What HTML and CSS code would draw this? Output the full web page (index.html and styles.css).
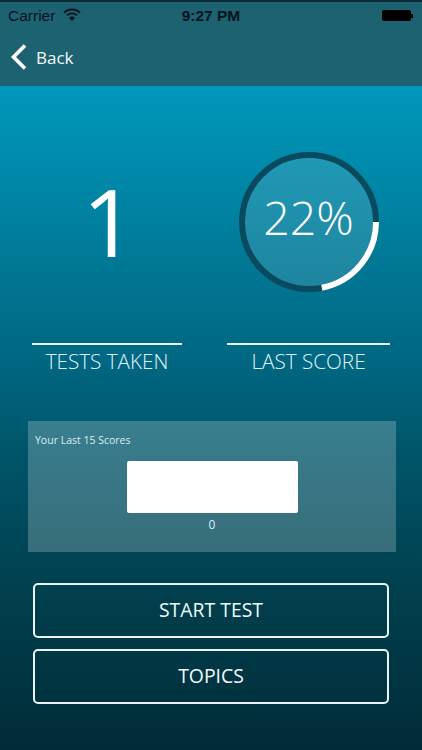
FILE: index.html
```html
<!DOCTYPE html>
<html lang="en">
<head>
<meta charset="utf-8">
<title>Test stats</title>
<link rel="stylesheet" href="styles.css">
</head>
<body>
<div class="screen">
  <header class="top">
    <div class="status">
      <div class="status-left">
        <span>Carrier</span>
        <svg class="wifi" viewBox="0 0 18 13" width="18" height="13"><path d="M1 4.6C5.6.4 12.4.4 17 4.6" fill="none" stroke="#04141c" stroke-width="1.8"/><path d="M3.8 7.4c3-2.7 7.4-2.7 10.400 0" fill="none" stroke="#04141c" stroke-width="1.800"/><path d="M9 13 5.900 9.700c1.800-1.500 4.400-1.500 6.200 0z" fill="#04141c"/></svg>
      </div>
      <span class="clock">9:27 PM</span>
      <div class="battery"><span class="battery-body"></span><span class="battery-tip"></span></div>
    </div>
    <nav class="nav">
      <svg class="chevron" viewBox="0 0 18 28" width="18" height="28"><path d="M15 2.500 3.500 14 15 25.500" fill="none" stroke="#fff" stroke-width="3.600"/></svg>
      <span>Back</span>
    </nav>
  </header>
  <main class="content">
    <section class="stats">
      <div class="stat stat-left">
        <div class="stat-value stat-value-number"><span class="big-one">1</span></div>
        <div class="stat-label">TESTS TAKEN</div>
      </div>
      <div class="stat stat-right">
        <div class="stat-value">
          <div class="ring">
            <svg viewBox="0 0 140 140" width="140" height="140">
              <circle cx="70" cy="70" r="67" fill="#ffffff" fill-opacity="0.12" stroke="#0a4a5e" stroke-width="6"/>
              <path d="M137 70A67 67 0 0 1 82.800 135.800" fill="none" stroke="#fff" stroke-width="6"/>
            </svg>
            <span class="ring-text">22%</span>
          </div>
        </div>
        <div class="stat-label">LAST SCORE</div>
      </div>
    </section>
    <section class="panel">
      <div class="panel-title">Your Last 15 Scores</div>
      <div class="bar"></div>
      <div class="bar-label">0</div>
    </section>
    <section class="actions">
      <a class="btn">START TEST</a>
      <a class="btn">TOPICS</a>
    </section>
  </main>
</div>
</body>
</html>
```
FILE: styles.css
```css
* { box-sizing: border-box; }
html, body { margin: 0; height: 100%; }
body { font-family: "Open Sans", "Noto Sans", sans-serif; color: #fff; overflow: hidden; }
.screen { width: 422px; height: 750px; display: flex; flex-direction: column; background: #01222d; }
.top { height: 86px; background: #1d6271; border-top: 2px solid #0c2a33; flex: none; }
.status { height: 24px; padding: 3px 8px 0 8px; display: grid; grid-template-columns: 1fr auto 1fr; align-items: center; color: #04141c; font-family: "Liberation Sans", sans-serif; font-size: 15.500px; }
.status-left { display: flex; align-items: center; gap: 8px; }
.wifi { margin-top: -2px; }
.clock { font-weight: 700; font-size: 15.500px; }
.battery { display: flex; justify-content: flex-end; align-items: center; padding-right: 1px; }
.battery-body { width: 29px; height: 11px; background: #000; border-radius: 2px; }
.battery-tip { width: 2px; height: 4px; background: #000; }
.nav { height: 60px; display: flex; align-items: center; padding: 2px 0 0 10px; gap: 8px; font-size: 17px; }
.nav span { color: #f4fbfc; }
.content { flex: 1; padding: 0 25px 0 28px; display: flex; flex-direction: column; background: linear-gradient(#0098bb 0%, #006681 42%, #005468 56%, #01414f 75%, #012b38 100%); }
.stats { display: flex; padding: 66px 7px 0 4px; height: 335px; justify-content: space-between; }
.stat { display: flex; flex-direction: column; }
.stat-left { width: 150px; }
.stat-right { width: 163px; }
.stat-value { height: 191px; padding-bottom: 52px; display: flex; align-items: center; justify-content: center; }
.stat-value-number { padding: 0 0 54px 4px; }
.big-one { font-size: 94px; font-weight: 400; line-height: 1; }
.ring { position: relative; width: 140px; height: 140px; }
.ring svg { display: block; }
.ring-text { position: absolute; inset: 0; padding-bottom: 10px; display: flex; align-items: center; justify-content: center; font-size: 46.500px; font-weight: 350; }
.stat-label { border-top: 2px solid #e6f4f6; text-align: center; padding-top: 3px; font-size: 20.700px; font-weight: 300; color: #e0f4f7; line-height: 27px; }
.panel { height: 131px; margin-right: 1px; background: rgba(255, 255, 255, 0.22); padding: 12px 7px 0; display: flex; flex-direction: column; align-items: center; }
.panel-title { align-self: flex-start; font-size: 10.500px; line-height: 14px; color: #d8eef2; }
.bar { width: 171px; height: 52px; background: #fff; border-radius: 2px; margin-top: 14px; }
.bar-label { font-size: 12px; line-height: 14px; margin-top: 5px; color: #d8eef2; }
.actions { display: flex; flex-direction: column; gap: 11px; padding: 31px 8px 0 5px; }
.btn { height: 55px; padding-bottom: 3px; border: 2px solid #eaf3f5; border-radius: 5px; display: flex; align-items: center; justify-content: center; font-size: 19.400px; font-weight: 500; color: #f2fafb; }
```
